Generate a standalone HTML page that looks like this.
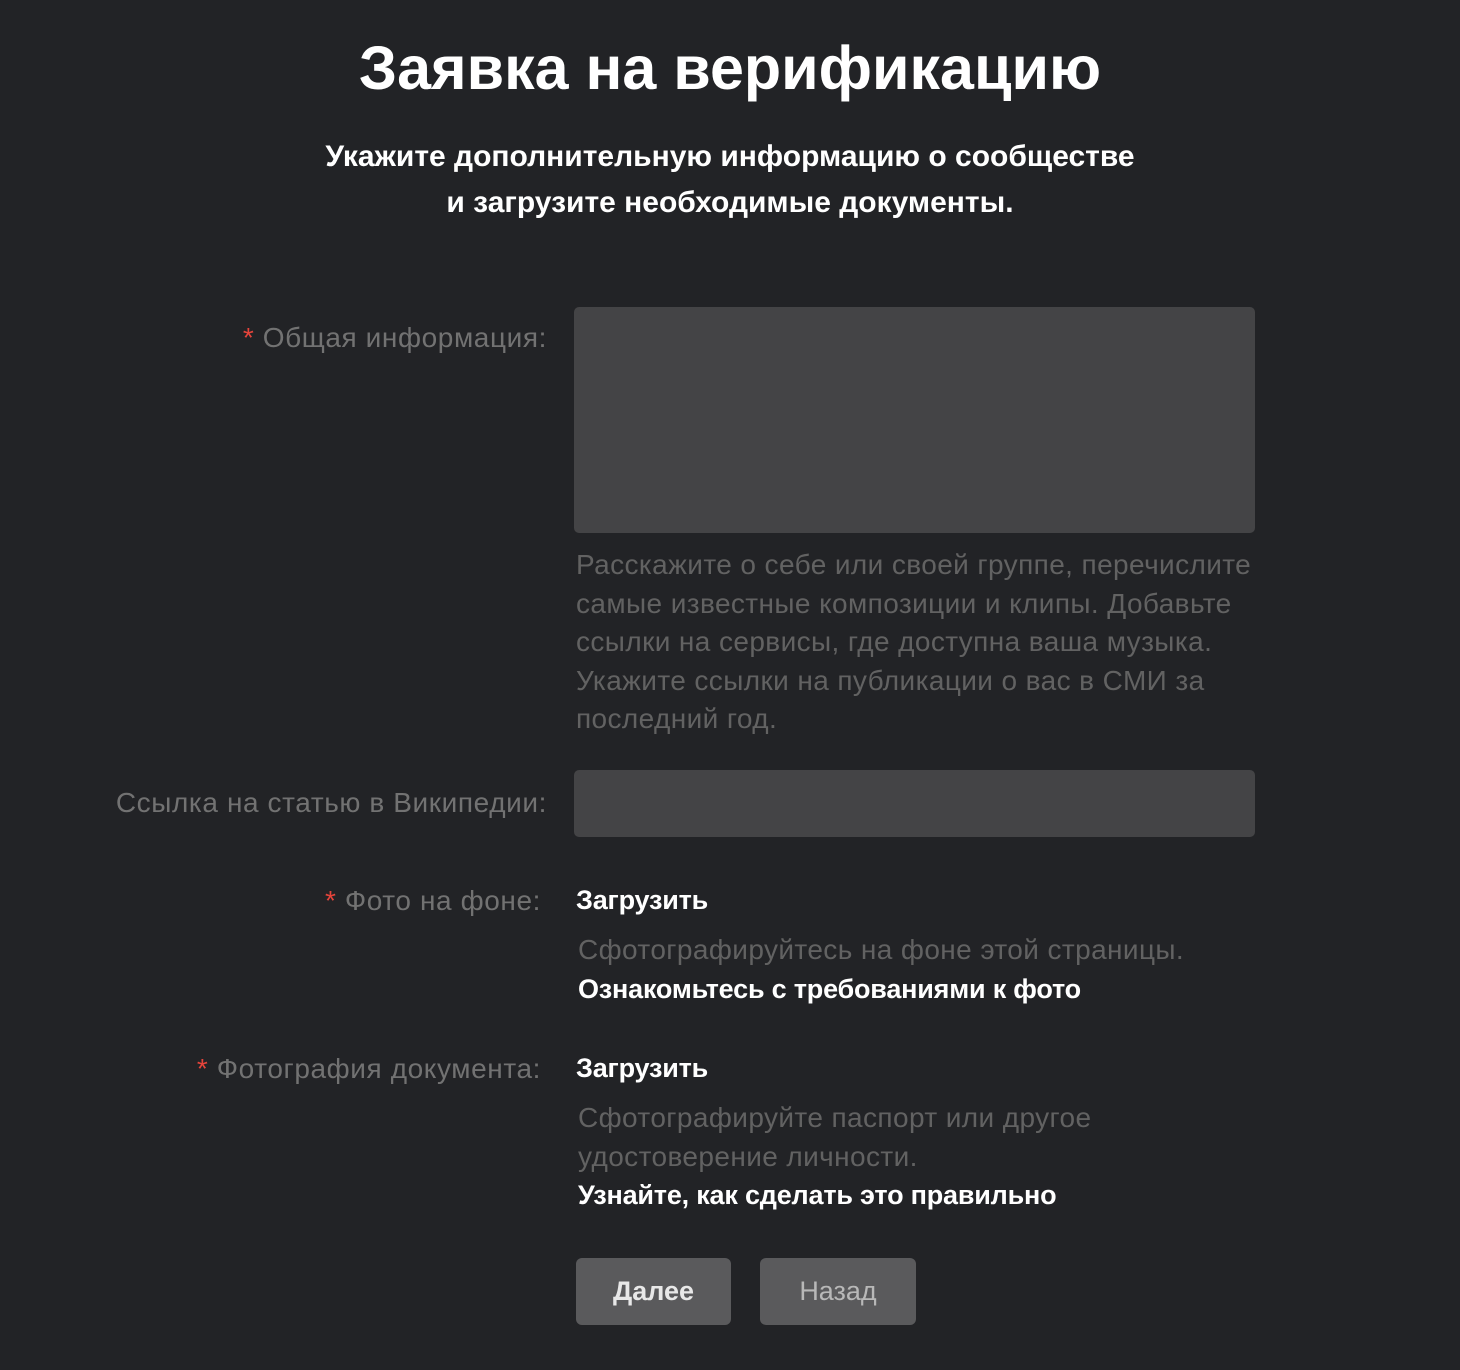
<!DOCTYPE html>
<html><head><meta charset="utf-8"><style>
body{margin:0;width:1460px;height:1370px;background:#222326;font-family:"Liberation Sans",sans-serif;position:relative;overflow:hidden}
.a{position:absolute;white-space:nowrap}
.t{left:0;width:1460px;text-align:center;color:#fff;font-weight:bold}
.l{color:#727272;font-size:28px;text-align:right;right:913px;letter-spacing:0.6px}
.s{color:#e5443b}
.h{color:#626262;font-size:28px;left:576px;line-height:38.5px;letter-spacing:0.4px}
.w{color:#fff;font-size:27px;font-weight:bold;letter-spacing:-0.2px}
.f{background:#444446;border-radius:5px;left:574px;width:681px}
.b{background:#5a5a5c;border-radius:6px;top:1258px;height:67px;font-size:27px;font-weight:bold;text-align:center;line-height:67px}
</style></head><body>
<div class="a t" style="top:33px;font-size:61px">Заявка на верификацию</div>
<div class="a t" style="top:134px;font-size:30px;line-height:46px">Укажите дополнительную информацию о сообществе<br>и загрузите необходимые документы.</div>
<div class="a l" style="top:322px"><span class="s">*</span> Общая информация:</div>
<div class="a f" style="top:307px;height:226px"></div>
<div class="a h" style="top:546px">Расскажите о себе или своей группе, перечислите<br>самые известные композиции и клипы. Добавьте<br>ссылки на сервисы, где доступна ваша музыка.<br>Укажите ссылки на публикации о вас в СМИ за<br>последний год.</div>
<div class="a l" style="top:787px">Ссылка на статью в Википедии:</div>
<div class="a f" style="top:770px;height:67px"></div>
<div class="a l" style="top:885px;right:919px"><span class="s">*</span> Фото на фоне:</div>
<div class="a w" style="top:885px;left:576px">Загрузить</div>
<div class="a h" style="top:931px;left:578px">Сфотографируйтесь на фоне этой страницы.</div>
<div class="a w" style="top:974px;left:578px">Ознакомьтесь с требованиями к фото</div>
<div class="a l" style="top:1053px;right:919px"><span class="s">*</span> Фотография документа:</div>
<div class="a w" style="top:1053px;left:576px">Загрузить</div>
<div class="a h" style="top:1099px;left:578px">Сфотографируйте паспорт или другое<br>удостоверение личности.</div>
<div class="a w" style="top:1180px;left:578px">Узнайте, как сделать это правильно</div>
<div class="a b" style="left:576px;width:155px;color:#e8e8e8">Далее</div>
<div class="a b" style="left:760px;width:156px;color:#b8b8b8;font-weight:normal">Назад</div>
</body></html>
